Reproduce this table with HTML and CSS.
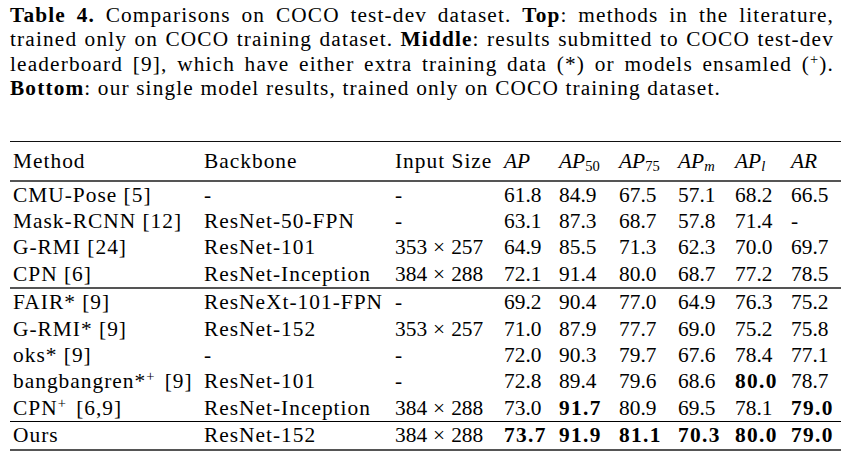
FILE: index.html
```html
<!DOCTYPE html>
<html>
<head>
<meta charset="utf-8">
<link rel="stylesheet" href="styles.css">
</head>
<body>
<div class="page">
  <p class="caption">
    <span class="line"><b>Table 4.</b> Comparisons on COCO test-dev dataset. <b>Top</b>: methods in the literature,</span>
    <span class="line">trained only on COCO training dataset. <b>Middle</b>: results submitted to COCO test-dev</span>
    <span class="line">leaderboard [9], which have either extra training data (*) or models ensamled (<sup>+</sup>).</span>
    <span class="line last"><b>Bottom</b>: our single model results, trained only on COCO training dataset.</span>
  </p>
  <table class="results">
    <colgroup>
      <col class="c-method"><col class="c-backbone"><col class="c-size">
      <col class="c-ap"><col class="c-ap50"><col class="c-ap75"><col class="c-apm"><col class="c-apl"><col class="c-ar">
    </colgroup>
    <thead>
      <tr>
        <th class="txt">Method</th><th class="txt">Backbone</th><th class="txt">Input Size</th>
        <th><i>AP</i></th><th><i>AP</i><sub>50</sub></th><th><i>AP</i><sub>75</sub></th>
        <th><i>AP</i><sub><i>m</i></sub></th><th><i>AP</i><sub><i>l</i></sub></th><th><i>AR</i></th>
      </tr>
    </thead>
    <tbody class="top">
      <tr><td class="txt">CMU-Pose [5]</td><td class="txt">-</td><td class="txt">-</td><td>61.8</td><td>84.9</td><td>67.5</td><td>57.1</td><td>68.2</td><td>66.5</td></tr>
      <tr><td class="txt">Mask-RCNN [12]</td><td class="txt">ResNet-50-FPN</td><td class="txt">-</td><td>63.1</td><td>87.3</td><td>68.7</td><td>57.8</td><td>71.4</td><td>-</td></tr>
      <tr><td class="txt">G-RMI [24]</td><td class="txt">ResNet-101</td><td>353<span class="times">×</span>257</td><td>64.9</td><td>85.5</td><td>71.3</td><td>62.3</td><td>70.0</td><td>69.7</td></tr>
      <tr><td class="txt">CPN [6]</td><td class="txt">ResNet-Inception</td><td>384<span class="times">×</span>288</td><td>72.1</td><td>91.4</td><td>80.0</td><td>68.7</td><td>77.2</td><td>78.5</td></tr>
    </tbody>
    <tbody class="middle">
      <tr><td class="txt">FAIR* [9]</td><td class="txt">ResNeXt-101-FPN</td><td class="txt">-</td><td>69.2</td><td>90.4</td><td>77.0</td><td>64.9</td><td>76.3</td><td>75.2</td></tr>
      <tr><td class="txt">G-RMI* [9]</td><td class="txt">ResNet-152</td><td>353<span class="times">×</span>257</td><td>71.0</td><td>87.9</td><td>77.7</td><td>69.0</td><td>75.2</td><td>75.8</td></tr>
      <tr><td class="txt">oks* [9]</td><td class="txt">-</td><td class="txt">-</td><td>72.0</td><td>90.3</td><td>79.7</td><td>67.6</td><td>78.4</td><td>77.1</td></tr>
      <tr><td class="txt">bangbangren*<sup>+</sup> [9]</td><td class="txt">ResNet-101</td><td class="txt">-</td><td>72.8</td><td>89.4</td><td>79.6</td><td>68.6</td><td><b>80.0</b></td><td>78.7</td></tr>
      <tr><td class="txt">CPN<sup>+</sup> [6,9]</td><td class="txt">ResNet-Inception</td><td>384<span class="times">×</span>288</td><td>73.0</td><td><b>91.7</b></td><td>80.9</td><td>69.5</td><td>78.1</td><td><b>79.0</b></td></tr>
    </tbody>
    <tbody class="bottom">
      <tr><td class="txt">Ours</td><td class="txt">ResNet-152</td><td>384<span class="times">×</span>288</td><td><b>73.7</b></td><td><b>91.9</b></td><td><b>81.1</b></td><td><b>70.3</b></td><td><b>80.0</b></td><td><b>79.0</b></td></tr>
    </tbody>
  </table>
</div>
</body>
</html>
```

FILE: styles.css
```css
html, body {
  margin: 0;
  padding: 0;
  background: #ffffff;
}

body {
  font-family: "Liberation Serif", "Times New Roman", serif;
  color: #000000;
}

.page {
  width: 824px;
  padding: 3px 0 0 10px;
}

.caption {
  margin: 0;
  font-size: 21.3px;
  line-height: 24.4px;
  letter-spacing: 1.15px;
}

.caption .line {
  display: block;
  white-space: nowrap;
  text-align: justify;
  text-align-last: justify;
}

.caption .line.last {
  text-align: left;
  text-align-last: left;
}

.caption b {
  font-weight: bold;
}

.caption sup {
  font-size: 0.68em;
  line-height: 0;
  vertical-align: 0.5em;
}

.results {
  margin-top: 40px;
  width: 831px;
  border-collapse: collapse;
  table-layout: fixed;
  font-size: 21.4px;
}

.c-method { width: 191px; }
.c-backbone { width: 191px; }
.c-size { width: 109px; }
.c-ap { width: 55px; }
.c-ap50 { width: 60px; }
.c-ap75 { width: 59px; }
.c-apm { width: 57px; }
.c-apl { width: 56px; }
.c-ar { width: 53px; }

.results th,
.results td {
  padding: 0 0 0 3px;
  text-align: left;
  white-space: nowrap;
  font-weight: normal;
}

.results .txt {
  letter-spacing: 1px;
}

.results .times {
  padding: 0 6px;
}

.results thead th {
  height: 38px;
  line-height: 26px;
  padding-top: 0;
  padding-bottom: 0;
  border-top: 1.6px solid #111111;
  border-bottom: 2px solid #555555;
}

.results td {
  height: 26.4px;
  line-height: 26.4px;
}

.results sub {
  font-size: 0.68em;
  line-height: 0;
  vertical-align: -0.2em;
}

.results sup {
  font-size: 0.68em;
  line-height: 0;
  vertical-align: 0.5em;
  letter-spacing: 0;
  padding-right: 4px;
}

.results td b {
  font-weight: bold;
  letter-spacing: 1.3px;
}

.results tbody.middle tr:first-child td {
  border-top: 2px solid #555555;
}

.results tbody.bottom tr td {
  border-top: 1px solid #000000;
  border-bottom: 2px solid #555555;
}
```
